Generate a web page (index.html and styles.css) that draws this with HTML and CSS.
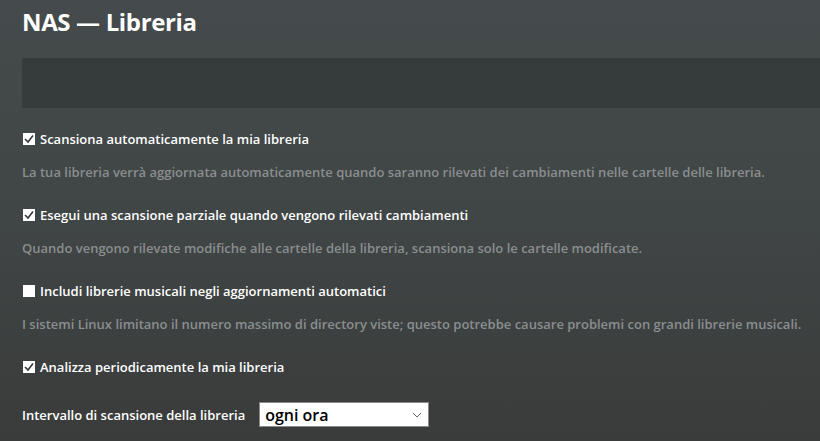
FILE: index.html
```html
<!DOCTYPE html>
<html lang="it">
<head>
<meta charset="utf-8">
<title>NAS — Libreria</title>
<link rel="stylesheet" href="styles.css">
</head>
<body>
<div class="page">
  <h1 class="title">NAS — Libreria</h1>
  <div class="band"></div>

  <div class="setting">
    <label class="check-row"><input type="checkbox" class="cb" checked><span>Scansiona automaticamente la mia libreria</span></label>
    <p class="help">La tua libreria verrà aggiornata automaticamente quando saranno rilevati dei cambiamenti nelle cartelle delle libreria.</p>
  </div>

  <div class="setting">
    <label class="check-row"><input type="checkbox" class="cb" checked><span>Esegui una scansione parziale quando vengono rilevati cambiamenti</span></label>
    <p class="help">Quando vengono rilevate modifiche alle cartelle della libreria, scansiona solo le cartelle modificate.</p>
  </div>

  <div class="setting">
    <label class="check-row"><input type="checkbox" class="cb"><span>Includi librerie musicali negli aggiornamenti automatici</span></label>
    <p class="help">I sistemi Linux limitano il numero massimo di directory viste; questo potrebbe causare problemi con grandi librerie musicali.</p>
  </div>

  <div class="setting">
    <label class="check-row"><input type="checkbox" class="cb" checked><span>Analizza periodicamente la mia libreria</span></label>
  </div>

  <div class="select-row">
    <span class="select-label">Intervallo di scansione della libreria</span>
    <div class="select">
      <span class="select-value">ogni ora</span>
      <svg class="chev" width="10" height="6" viewBox="0 0 10 6"><path d="M1 1 L5 5 L9 1" fill="none" stroke="#666" stroke-width="1"/></svg>
    </div>
  </div>
</div>
</body>
</html>
```

FILE: styles.css
```css
html, body {
  margin: 0;
  padding: 0;
  height: 100%;
}
body {
  background: linear-gradient(180deg, #454b4c 0%, #404545 50%, #3a3c3b 100%);
  font-family: "Open Sans", "Liberation Sans", sans-serif;
  color: #fff;
  overflow: hidden;
}
.page {
  padding: 0 0 0 22px;
}
.title {
  margin: 0;
  padding-top: 5px;
  font-size: 24px;
  font-weight: 700;
  line-height: 34px;
  letter-spacing: -0.35px;
}
.band {
  margin-top: 19px;
  height: 50px;
  background: #363b3b;
}
.setting {
  margin-top: 22px;
}
.setting + .setting {
  margin-top: 25px;
}
.check-row {
  display: flex;
  align-items: center;
  gap: 5px;
  font-size: 13px;
  font-weight: 600;
  line-height: 18px;
  height: 18px;
}
.cb {
  appearance: none;
  -webkit-appearance: none;
  margin: 0 0 0 1px;
  width: 12px;
  height: 12px;
  background: #fff;
  border: none;
  border-radius: 0;
  flex: none;
}
.cb:checked {
  background: #fff url("data:image/svg+xml;utf8,<svg xmlns='http://www.w3.org/2000/svg' width='12' height='12' viewBox='0 0 12 12'><path d='M2 6 L5 9 L10 2.5' fill='none' stroke='%23333' stroke-width='1.5'/></svg>") no-repeat center;
}
.help {
  margin: 15px 0 0 0;
  font-size: 13px;
  font-weight: 600;
  line-height: 18px;
  color: #8a8e8f;
}
.select-row {
  margin-top: 26px;
  display: flex;
  align-items: center;
  gap: 14px;
  font-size: 13px;
  font-weight: 600;
}
.select {
  width: 157px;
  height: 23px;
  background: #fff;
  border: 1px solid #8a8a8a;
  display: flex;
  align-items: center;
  justify-content: space-between;
  padding: 0 6px 0 5px;
  box-sizing: content-box;
  color: #000;
}
.select-value {
  font-size: 16px;
  font-weight: 600;
}
.chev {
  display: block;
}
```
